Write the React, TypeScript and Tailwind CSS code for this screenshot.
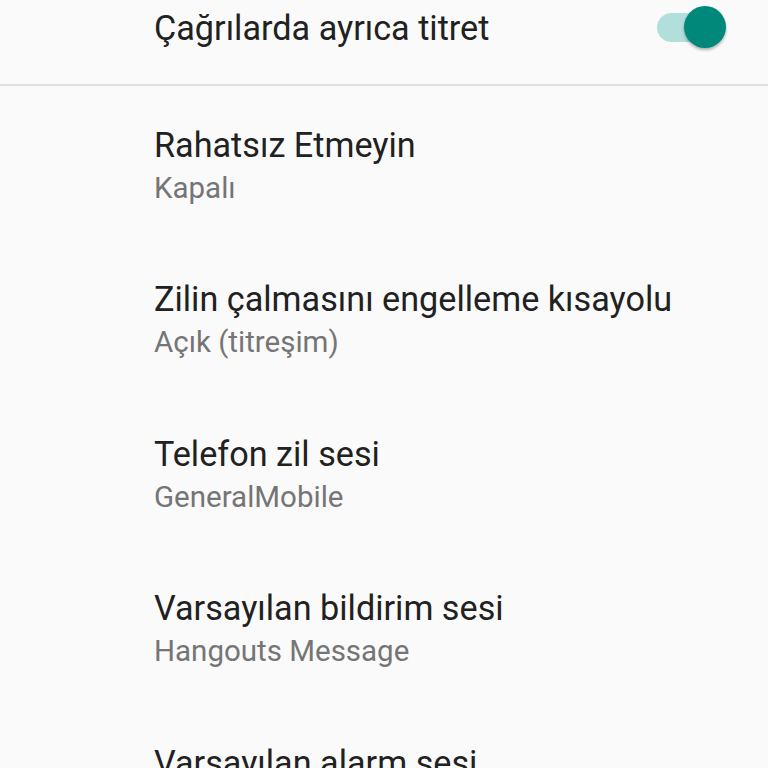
const rows = [
  { title: "Rahatsız Etmeyin", sub: "Kapalı" },
  { title: "Zilin çalmasını engelleme kısayolu", sub: "Açık (titreşim)" },
  { title: "Telefon zil sesi", sub: "GeneralMobile" },
  { title: "Varsayılan bildirim sesi", sub: "Hangouts Message" },
  { title: "Varsayılan alarm sesi", sub: "" },
];

export default function App() {
  return (
    <div className="h-[768px] w-[768px] overflow-hidden bg-[#fafafa] font-['Roboto',sans-serif]">
      {/* Vibrate toggle row */}
      <div className="flex h-[84px] items-start justify-between pl-[154px] pr-[42px]">
        <span className="pt-[8px] text-[34.2px] leading-[40px] text-[#212121]">
          Çağrılarda ayrıca titret
        </span>
        <div className="relative mt-[6px] h-[42px] w-[70px]">
          <div className="absolute left-[1px] top-[7px] h-[29px] w-[62px] rounded-full bg-[#b2dfdb]" />
          <div className="absolute right-0 top-0 h-[42px] w-[42px] rounded-full bg-[#00897b] shadow-[0_2px_3px_rgba(0,0,0,0.3)]" />
        </div>
      </div>
      <div className="h-[2px] bg-[#e0e0e0]" />

      {rows.map((r) => (
        <div key={r.title} className="h-[154.5px] pl-[154px] pt-[38.5px]">
          <div className="text-[34.2px] leading-[40px] text-[#212121]">{r.title}</div>
          {r.sub && (
            <div className="mt-[3px] text-[29.5px] leading-[40px] text-[#757575]">{r.sub}</div>
          )}
        </div>
      ))}
    </div>
  );
}
